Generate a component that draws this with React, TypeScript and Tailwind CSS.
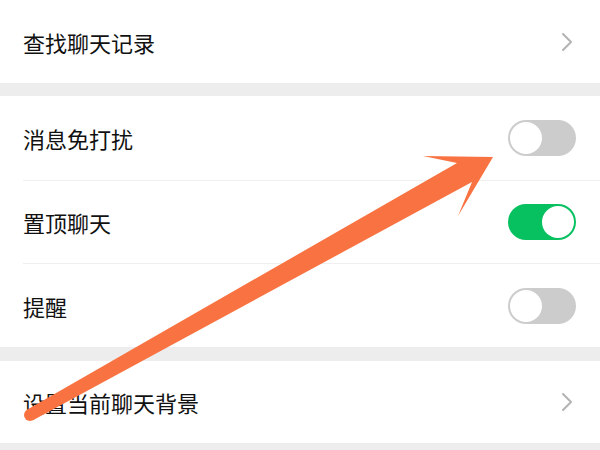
import React from 'react';

const ChevronRight = () => (
  <svg width="12" height="20" viewBox="0 0 12 20" fill="none">
    <path d="M2 2l8 8-8 8" stroke="#b3b3b3" strokeWidth="2" strokeLinecap="round" strokeLinejoin="round" />
  </svg>
);

const Toggle = ({ on }: { on: boolean }) => (
  <div
    className={`w-[68px] h-[36px] rounded-full p-[2px] flex items-center ${
      on ? 'bg-[#07c160] justify-end' : 'bg-[#cccccc] justify-start'
    }`}
  >
    <div className="w-[32px] h-[32px] rounded-full bg-white" />
  </div>
);

const Row = ({ label, children, h }: { label: string; children: React.ReactNode; h: string }) => (
  <div className={`${h} flex items-center justify-between pl-[23px] pr-[24px] bg-white`}>
    <span className="text-[22px] text-[#111111] leading-none">{label}</span>
    {children}
  </div>
);

const Divider = () => (
  <div className="bg-white pl-[23px]">
    <div className="h-px bg-[#efefef]" />
  </div>
);

export default function App() {
  return (
    <div
      className="relative w-[600px] h-[450px] overflow-hidden bg-[#ededed]"
      style={{ fontFamily: '"Noto Sans CJK SC", "Noto Sans", sans-serif' }}
    >
      <Row label="查找聊天记录" h="h-[83px]">
        <div className="pr-[3px]"><ChevronRight /></div>
      </Row>
      <div className="h-[13px]" />
      <Row label="消息免打扰" h="h-[84px]">
        <Toggle on={false} />
      </Row>
      <Divider />
      <Row label="置顶聊天" h="h-[82px]">
        <Toggle on={true} />
      </Row>
      <Divider />
      <Row label="提醒" h="h-[83px]">
        <Toggle on={false} />
      </Row>
      <div className="h-[14px]" />
      <Row label="设置当前聊天背景" h="h-[82px]">
        <div className="pr-[3px]"><ChevronRight /></div>
      </Row>

      {/* annotation arrow */}
      <svg className="absolute inset-0 pointer-events-none" width="600" height="450" viewBox="0 0 600 450">
        <circle cx="30" cy="415" r="6" fill="#f87341" />
        <polygon
          points="27,409.8 457,163 423,156 493,157 458,216 472,182 33,420.2"
          fill="#f87341"
        />
      </svg>
    </div>
  );
}
